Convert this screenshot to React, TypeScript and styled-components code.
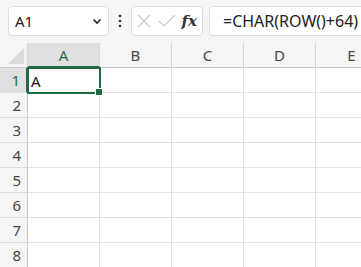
import React from "react";
import styled, { createGlobalStyle } from "styled-components";

const Global = createGlobalStyle`
  html, body { margin: 0; padding: 0; background: #ffffff; overflow: hidden; }
  body { font-family: "Noto Sans", "Noto Sans CJK JP", sans-serif; }
`;

const Page = styled.div`
  width: 361px;
  height: 267px;
  overflow: hidden;
  display: flex;
  flex-direction: column;
  background: #ffffff;
`;

const Toolbar = styled.div`
  height: 43px;
  flex: none;
  display: flex;
  align-items: center;
  padding: 0 0 1px 8px;
  box-sizing: border-box;
  background: #f5f5f5;
`;

const Box = styled.div`
  height: 30px;
  box-sizing: border-box;
  background: #ffffff;
  border: 1px solid #dcdcdc;
  border-radius: 4px;
  display: flex;
  align-items: center;
`;

const NameBox = styled(Box)`
  width: 101px;
  padding: 0 6px 0 6px;
  justify-content: space-between;
  font-size: 15px;
  color: #222;
`;

const Dots = styled.div`
  width: 22px;
  display: flex;
  justify-content: center;
`;

const ActionBox = styled(Box)`
  width: 72px;
  padding: 0 4px;
  gap: 2px;
  justify-content: space-between;
`;

const Fx = styled.span`
  font-family: "DejaVu Serif", "Liberation Serif", serif;
  font-style: italic;
  font-size: 15px;
  font-weight: bold;
  color: #333;
  margin-right: 1px;
`;

const FormulaBox = styled(Box)`
  margin-left: 6px;
  flex: 1;
  margin-right: -12px;
  padding-left: 13px;
  font-size: 16px;
  color: #222;
  white-space: nowrap;
`;

const Grid = styled.div`
  display: grid;
  grid-template-columns: 28px repeat(5, 72px);
  grid-auto-rows: 25px;
  flex: 1;
`;

const Corner = styled.div`
  background: #f5f5f5;
  border-right: 1px solid #d5d5d5;
  border-bottom: 1px solid #c8c8c8;
  position: relative;
  &::after {
    content: "";
    position: absolute;
    right: 3px;
    bottom: 3px;
    border-left: 16px solid transparent;
    border-bottom: 16px solid #dcdcdc;
  }
`;

const ColHead = styled.div<{ $active?: boolean }>`
  background: ${(p) => (p.$active ? "#e0e0e0" : "#f5f5f5")};
  color: ${(p) => (p.$active ? "#1e6b41" : "#444")};
  border-right: 1px solid #d5d5d5;
  border-bottom: ${(p) => (p.$active ? "2px solid #1e6b41" : "1px solid #c8c8c8")};
  box-sizing: border-box;
  display: flex;
  align-items: center;
  justify-content: center;
  font-size: 15px;
`;

const RowHead = styled.div<{ $active?: boolean }>`
  background: ${(p) => (p.$active ? "#e0e0e0" : "#f5f5f5")};
  color: ${(p) => (p.$active ? "#1e6b41" : "#444")};
  border-right: ${(p) => (p.$active ? "2px solid #1e6b41" : "1px solid #c8c8c8")};
  border-bottom: 1px solid #dcdcdc;
  box-sizing: border-box;
  display: flex;
  align-items: center;
  justify-content: flex-end;
  padding-right: 6px;
  font-size: 15px;
`;

const Cell = styled.div`
  border-right: 1px solid #e1e1e1;
  border-bottom: 1px solid #e1e1e1;
  box-sizing: border-box;
  display: flex;
  align-items: center;
  padding-left: 3px;
  font-size: 15px;
  color: #111;
`;

const ActiveCell = styled(Cell)`
  position: relative;
  border: 2px solid #1e6b41;
  margin: -1px 0 0 -1px;
  width: calc(100% + 2px);
  height: calc(100% + 2px);
  padding-left: 2px;
  &::after {
    content: "";
    position: absolute;
    right: -4px;
    bottom: -4px;
    width: 6px;
    height: 6px;
    background: #1e6b41;
    border: 1px solid #fff;
  }
`;

const cols = ["A", "B", "C", "D", "E"];
const rows = [1, 2, 3, 4, 5, 6, 7, 8];

export default function App() {
  return (
    <Page>
      <Global />
      <Toolbar>
        <NameBox>
          <span>A1</span>
          <svg width="10" height="7" viewBox="0 0 10 7">
            <path d="M1.5 1.5 L5 5 L8.5 1.5" fill="none" stroke="#222" strokeWidth="1.6" />
          </svg>
        </NameBox>
        <Dots>
          <svg width="4" height="14" viewBox="0 0 4 14">
            <circle cx="2" cy="2" r="1.3" fill="#333" />
            <circle cx="2" cy="7" r="1.3" fill="#333" />
            <circle cx="2" cy="12" r="1.3" fill="#333" />
          </svg>
        </Dots>
        <ActionBox>
          <svg width="16" height="16" viewBox="0 0 16 16">
            <path d="M2 2 L14 14 M14 2 L2 14" stroke="#c8c8c8" strokeWidth="1.2" fill="none" />
          </svg>
          <svg width="18" height="14" viewBox="0 0 18 14">
            <path d="M1 7 L6 12 L17 1" stroke="#c8c8c8" strokeWidth="1.2" fill="none" />
          </svg>
          <Fx>fx</Fx>
        </ActionBox>
        <FormulaBox>=CHAR(ROW()+64)</FormulaBox>
      </Toolbar>
      <Grid>
        <Corner />
        {cols.map((c) => (
          <ColHead key={c} $active={c === "A"}>{c}</ColHead>
        ))}
        {rows.map((r) => (
          <React.Fragment key={r}>
            <RowHead $active={r === 1}>{r}</RowHead>
            {cols.map((c) =>
              r === 1 && c === "A" ? (
                <ActiveCell key={c}>A</ActiveCell>
              ) : (
                <Cell key={c} />
              )
            )}
          </React.Fragment>
        ))}
      </Grid>
    </Page>
  );
}
